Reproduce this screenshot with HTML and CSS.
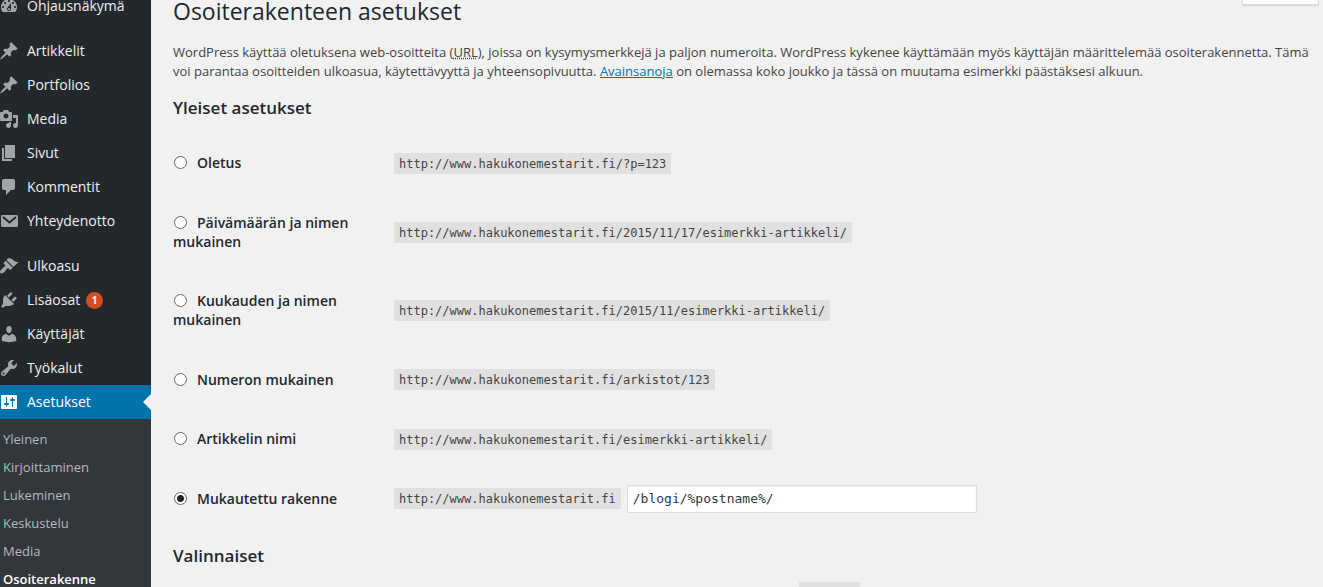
FILE: index.html
```html
<!DOCTYPE html>
<html lang="fi">
<head>
  <meta charset="UTF-8" />
  <meta name="viewport" content="width=device-width, initial-scale=1.0"/>
  <title>Osoiterakenteen asetukset</title>
  <link rel="stylesheet" href="styles.css">
</head>
<body>

  <nav class="sidebar">
    <ul class="menu">
      <li><a href="#">
        <svg class="icon" viewBox="0 0 20 20"><path d="M3.76 16h12.48c1.1-1.37 1.76-3.11 1.76-5 0-4.42-3.58-8-8-8s-8 3.58-8 8c0 1.89.66 3.63 1.76 5zM10 4c.55 0 1 .45 1 1s-.45 1-1 1-1-.45-1-1 .45-1 1-1zM6 6c.55 0 1 .45 1 1s-.45 1-1 1-1-.45-1-1 .45-1 1-1zm8 0c.55 0 1 .45 1 1s-.45 1-1 1-1-.45-1-1 .45-1 1-1zm-5.37 5.55L12 7v6c0 1.1-.9 2-2 2s-2-.9-2-2c0-.57.24-1.08.63-1.45zM4 10c.55 0 1 .45 1 1s-.45 1-1 1-1-.45-1-1 .45-1 1-1zm12 0c.55 0 1 .45 1 1s-.45 1-1 1-1-.45-1-1 .45-1 1-1zm-5 3c0-.55-.45-1-1-1s-1 .45-1 1 .45 1 1 1 1-.45 1-1z"/></svg>
        Ohjausnäkymä</a></li>
      <li class="separator"></li>
      <li><a href="#">
        <svg class="icon" viewBox="0 0 20 20"><path d="M10.44 3.02l1.82-1.82 6.36 6.35-1.83 1.82c-1.05-.68-2.48-.57-3.41.36l-.75.75c-.92.93-1.04 2.35-.35 3.41l-1.83 1.82-2.41-2.41-2.8 2.79c-.42.42-3.38 2.71-3.8 2.29s1.86-3.39 2.28-3.81l2.79-2.79L4.1 9.36l1.83-1.82c1.05.69 2.48.57 3.4-.36l.75-.75c.93-.92 1.05-2.35.36-3.41z"/></svg>
        Artikkelit</a></li>
      <li><a href="#">
        <svg class="icon" viewBox="0 0 20 20"><path d="M10.44 3.02l1.82-1.82 6.36 6.35-1.83 1.82c-1.05-.68-2.48-.57-3.41.36l-.75.75c-.92.93-1.04 2.35-.35 3.41l-1.83 1.82-2.41-2.41-2.8 2.79c-.42.42-3.38 2.71-3.8 2.29s1.86-3.39 2.28-3.81l2.79-2.79L4.1 9.36l1.83-1.82c1.05.69 2.48.57 3.4-.36l.75-.75c.93-.92 1.05-2.35.36-3.41z"/></svg>
        Portfolios</a></li>
      <li><a href="#">
        <svg class="icon" viewBox="0 0 20 20"><path d="M13 11V4c0-.55-.45-1-1-1h-1.67L9 1H5L3.67 3H2c-.55 0-1 .45-1 1v7c0 .55.45 1 1 1h10c.55 0 1-.45 1-1zM7 4.5c1.38 0 2.5 1.12 2.5 2.5S8.38 9.5 7 9.5 4.5 8.38 4.5 7 5.62 4.5 7 4.5zM14 6h5v10.5c0 1.38-1.12 2.5-2.5 2.5S14 17.88 14 16.5s1.12-2.5 2.5-2.5c.17 0 .34.02.5.05V9h-3V6zm-4 8.05V13h2v3.5c0 1.38-1.12 2.5-2.5 2.5S7 17.88 7 16.5 8.12 14 9.5 14c.17 0 .34.02.5.05z"/></svg>
        Media</a></li>
      <li><a href="#">
        <svg class="icon" viewBox="0 0 20 20"><path d="M6 15V2h10v13H6zm-1 1h8v2H3V5h2v11z"/></svg>
        Sivut</a></li>
      <li><a href="#">
        <svg class="icon" viewBox="0 0 20 20"><path d="M5 2h9c1.1 0 2 .9 2 2v7c0 1.1-.9 2-2 2h-2l-5 5v-5H5c-1.1 0-2-.9-2-2V4c0-1.1.9-2 2-2z"/></svg>
        Kommentit</a></li>
      <li><a href="#">
        <svg class="icon" viewBox="0 0 20 20"><path d="M3.5 4h14c.8 0 1.5.7 1.5 1.5v9c0 .8-.7 1.5-1.5 1.5h-14c-.8 0-1.5-.7-1.5-1.5v-9C2 4.7 2.7 4 3.5 4z"/><path class="flap" d="M4 6l6.5 5.5L17 6"/></svg>
        Yhteydenotto</a></li>
      <li class="separator"></li>
      <li><a href="#">
        <svg class="icon" viewBox="0 0 20 20"><path d="M14.48 11.06L7.41 3.99l1.5-1.5c.5-.56 2.3-.47 3.51.32 1.21.8 1.43 1.28 2.91 2.1 1.18.64 2.45 1.26 4.45.85zm-.71.71L6.7 4.7 4.93 6.47c-.39.39-.39 1.02 0 1.41l1.06 1.06c.39.39.39 1.03 0 1.42-.6.6-1.43 1.11-2.21 1.69-.35.26-.7.53-1.01.84C1.43 14.23.4 16.08 1.4 17.07c.99 1 2.84-.03 4.18-1.36.31-.31.58-.66.85-1.02.57-.78 1.08-1.61 1.69-2.21.39-.39 1.02-.39 1.41 0l1.06 1.06c.39.39 1.02.39 1.41 0z"/></svg>
        Ulkoasu</a></li>
      <li><a href="#">
        <svg class="icon" viewBox="0 0 20 20"><path d="M13.11 4.36L9.87 7.6 8 5.73l3.24-3.24c.35-.34 1.05-.2 1.56.32.52.51.66 1.21.31 1.55zm-8 1.77l.91-1.12 9.01 9.01-1.19.84c-.71.71-2.63 1.16-3.82 1.16H6.14L4.9 17.26c-.59.59-1.54.59-2.12 0-.59-.58-.59-1.53 0-2.12l1.24-1.24v-3.88c0-1.13.4-3.19 1.09-3.89zm7.26 3.97l3.24-3.24c.34-.35 1.04-.21 1.55.31.52.51.66 1.21.31 1.55l-3.24 3.25z"/></svg>
        Lisäosat <span class="badge">1</span></a></li>
      <li><a href="#">
        <svg class="icon" viewBox="0 0 20 20"><path d="M10 9.25c-2.27 0-2.73-3.44-2.73-3.44C7 4.02 7.82 2 9.97 2c2.16 0 2.98 2.02 2.71 3.81 0 0-.41 3.44-2.68 3.44zm0 2.57L12.72 10c2.39 0 4.52 2.33 4.52 4.53v2.49s-3.65 1.13-7.24 1.13c-3.65 0-7.24-1.13-7.24-1.13v-2.49c0-2.25 1.94-4.48 4.47-4.48z"/></svg>
        Käyttäjät</a></li>
      <li><a href="#">
        <svg class="icon" viewBox="0 0 20 20"><path d="M16.68 9.77c-1.34 1.34-3.3 1.67-4.95.99l-5.41 6.52c-.99.99-2.59.99-3.58 0s-.99-2.59 0-3.57l6.52-5.42c-.68-1.65-.35-3.61.99-4.95 1.28-1.28 3.12-1.62 4.72-1.06l-2.89 2.89 2.82 2.82 2.86-2.87c.53 1.58.18 3.39-1.08 4.65zM3.81 16.21c.4.39 1.04.39 1.43 0 .4-.4.4-1.04 0-1.43-.39-.4-1.03-.4-1.43 0-.39.39-.39 1.03 0 1.43z"/></svg>
        Työkalut</a></li>
      <li><a href="#" class="current">
        <svg class="icon" viewBox="0 0 20 20"><path d="M18 16V4c0-.55-.45-1-1-1H3c-.55 0-1 .45-1 1v12c0 .55.45 1 1 1h14c.55 0 1-.45 1-1zM8 11h1c.55 0 1 .45 1 1s-.45 1-1 1H8v1.5c0 .28-.22.5-.5.5s-.5-.22-.5-.5V13H6c-.55 0-1-.45-1-1s.45-1 1-1h1V5.5c0-.28.22-.5.5-.5s.5.22.5.5V11zm5-2h-1c-.55 0-1-.45-1-1s.45-1 1-1h1V5.5c0-.28.22-.5.5-.5s.5.22.5.5V7h1c.55 0 1 .45 1 1s-.45 1-1 1h-1v5.5c0 .28-.22.5-.5.5s-.5-.22-.5-.5V9z"/></svg>
        Asetukset</a></li>
    </ul>
    <ul class="submenu">
      <li><a href="#">Yleinen</a></li>
      <li><a href="#">Kirjoittaminen</a></li>
      <li><a href="#">Lukeminen</a></li>
      <li><a href="#">Keskustelu</a></li>
      <li><a href="#">Media</a></li>
      <li><a href="#" class="active">Osoiterakenne</a></li>
    </ul>
  </nav>

  <main class="content">
    <button type="button" class="help-tab" aria-label="Ohje"></button>

    <h1>Osoiterakenteen asetukset</h1>
    <p>WordPress käyttää oletuksena web-osoitteita (<abbr>URL</abbr>), joissa on kysymysmerkkejä ja paljon numeroita. WordPress kykenee käyttämään myös käyttäjän määrittelemää osoiterakennetta. Tämä voi parantaa osoitteiden ulkoasua, käytettävyyttä ja yhteensopivuutta. <a href="#">Avainsanoja</a> on olemassa koko joukko ja tässä on muutama esimerkki päästäksesi alkuun.</p>

    <h2>Yleiset asetukset</h2>
    <table class="form-table">
      <tr>
        <th><label><input type="radio" name="rakenne">Oletus</label></th>
        <td><code>http://www.hakukonemestarit.fi/?p=123</code></td>
      </tr>
      <tr>
        <th><label><input type="radio" name="rakenne">Päivämäärän ja nimen mukainen</label></th>
        <td><code>http://www.hakukonemestarit.fi/2015/11/17/esimerkki-artikkeli/</code></td>
      </tr>
      <tr>
        <th><label><input type="radio" name="rakenne">Kuukauden ja nimen mukainen</label></th>
        <td><code>http://www.hakukonemestarit.fi/2015/11/esimerkki-artikkeli/</code></td>
      </tr>
      <tr>
        <th><label><input type="radio" name="rakenne">Numeron mukainen</label></th>
        <td><code>http://www.hakukonemestarit.fi/arkistot/123</code></td>
      </tr>
      <tr>
        <th><label><input type="radio" name="rakenne">Artikkelin nimi</label></th>
        <td><code>http://www.hakukonemestarit.fi/esimerkki-artikkeli/</code></td>
      </tr>
      <tr>
        <th><label><input type="radio" name="rakenne" checked>Mukautettu rakenne</label></th>
        <td>
          <div class="custom">
            <code>http://www.hakukonemestarit.fi</code>
            <input type="text" class="structure" value="/blogi/%postname%/" aria-label="Mukautettu rakenne">
          </div>
        </td>
      </tr>
    </table>

    <h2>Valinnaiset</h2>
    <p class="optional">Voit antaa kategorioiden ja avainsanojen osoitteille oman rakenteen. Määrittelemällä tähän esimerkiksi <code>aiheita</code> kategoria kantana saat siitä linkin.</p>
  </main>

</body>
</html>
```
FILE: styles.css
```css
body {
  margin: 0;
  font-family: "Open Sans", sans-serif;
  font-size: 13px;
  line-height: 19px;
  color: #444;
  background: #f1f1f1;
  display: flex;
  height: 100vh;
  overflow: hidden;
}

/* Sidebar */
.sidebar {
  width: 160px;
  flex-shrink: 0;
  margin-left: -9px;
  background: #23282d;
  overflow: hidden;
}

.menu, .submenu {
  list-style: none;
  margin: 0;
  padding: 0;
}

.menu {
  margin-top: -11px;
}

.menu a {
  display: flex;
  align-items: center;
  gap: 8px;
  height: 32px;
  padding: 0 0 2px 8px;
  font-size: 14px;
  color: #eee;
  text-decoration: none;
  position: relative;
}

.separator {
  height: 11px;
}

.icon {
  width: 20px;
  height: 20px;
  margin-top: 2px;
  fill: #a0a5aa;
}

.flap {
  fill: none;
  stroke: #23282d;
  stroke-width: 2;
}

.badge {
  width: 17px;
  height: 17px;
  margin: 2px 0 0 -2px;
  border-radius: 50%;
  background: #d54e21;
  color: #fff;
  font-size: 10px;
  font-weight: 700;
  line-height: 17px;
  text-align: center;
}

.menu .current {
  background: #0073aa;
  color: #fff;
}

.current .icon {
  fill: #fff;
}

.current::after {
  content: "";
  position: absolute;
  right: 0;
  top: 9px;
  border: 8px solid transparent;
  border-left-width: 0;
  border-right-color: #f1f1f1;
}

.submenu {
  background: #32373c;
  padding: 6px 0 12px;
}

.submenu a {
  display: block;
  padding: 5px 12px;
  line-height: 18px;
  color: #b4b9be;
  text-decoration: none;
}

.submenu .active {
  color: #fff;
  font-weight: 600;
}

/* Page content */
.content {
  flex: 1;
  padding: 0 10px 0 22px;
  position: relative;
}

.help-tab {
  position: absolute;
  top: -23px;
  right: 4px;
  width: 77px;
  height: 28px;
  background: #fff;
  border: 1px solid #ddd;
  box-shadow: 0 1px 1px rgba(0, 0, 0, 0.1);
}

h1 {
  margin: 0 0 21px;
  font-size: 23px;
  font-weight: 400;
  line-height: 22px;
  color: #23282d;
}

h2 {
  margin: 15px 0 13px;
  font-size: 17px;
  font-weight: 600;
  line-height: 24px;
  color: #23282d;
}

p {
  margin: 0;
}

p a {
  color: #0073aa;
}

.optional {
  margin-top: 15px;
}

abbr {
  text-decoration: underline dotted;
}

code {
  padding: 4px 5px 3px;
  background: #e0e0e0;
  font-family: "DejaVu Sans Mono", monospace;
  font-size: 12px;
  line-height: 14px;
}

/* Form */
.form-table {
  width: 100%;
  margin-bottom: 16px;
  border-collapse: collapse;
}

.form-table th {
  width: 200px;
  padding: 20px 11px 20px 0;
  font-size: 14px;
  font-weight: 600;
  text-align: left;
  vertical-align: top;
  color: #23282d;
}

.form-table tr:nth-child(odd) th {
  padding-bottom: 21px;
}

.form-table td {
  padding: 10px;
  vertical-align: middle;
}

.form-table input[type="radio"] {
  appearance: none;
  width: 13px;
  height: 13px;
  margin: 0 10px 0 1px;
  border: 1px solid #666;
  border-radius: 50%;
  background: #fff;
  vertical-align: -1px;
}

.form-table input[type="radio"]:checked {
  background: radial-gradient(circle, #222 3px, #fff 4px);
}

.custom {
  display: flex;
  align-items: baseline;
  gap: 6px;
}

.structure {
  width: 350px;
  height: 28px;
  box-sizing: border-box;
  padding: 3px 5px;
  border: 1px solid #ddd;
  box-shadow: inset 0 1px 2px rgba(0, 0, 0, 0.07);
  background: #fff;
  color: #32373c;
  font-family: "DejaVu Sans Mono", monospace;
  font-size: 13px;
}
```
